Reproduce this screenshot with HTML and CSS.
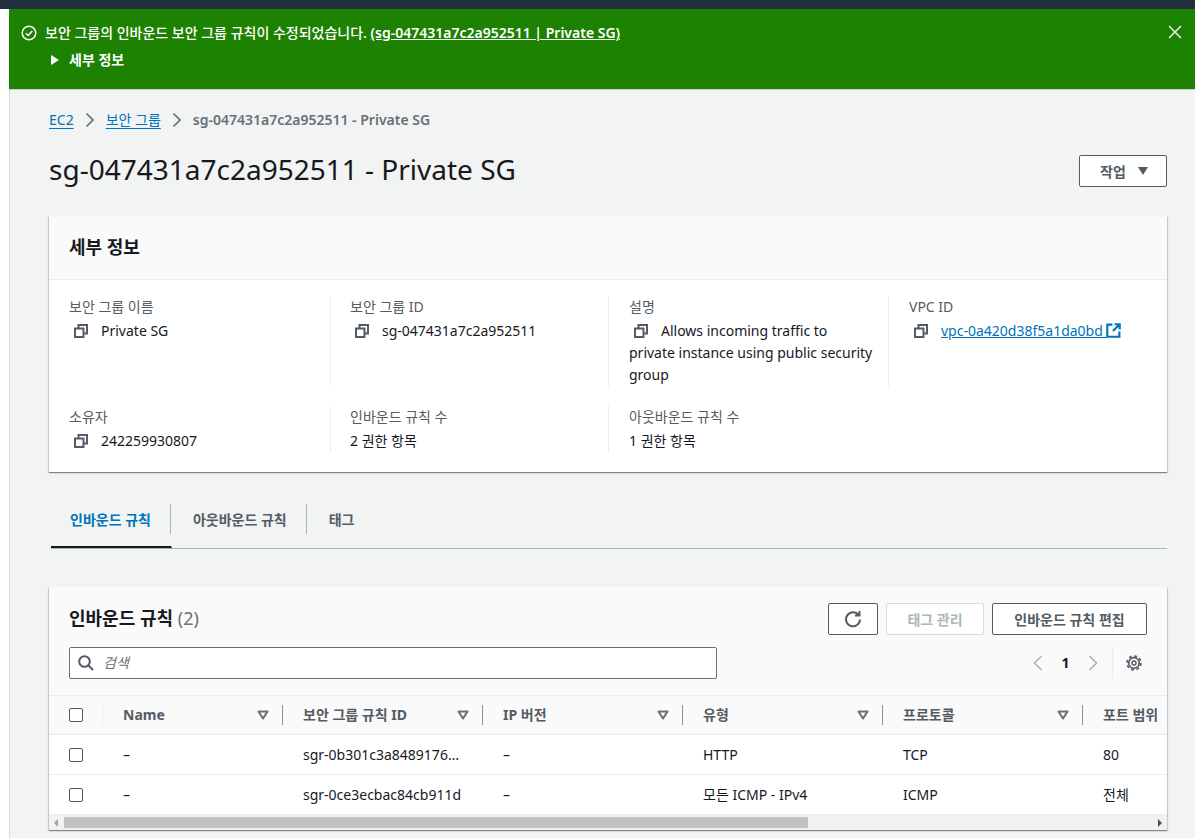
FILE: index.html
```html
<!DOCTYPE html>
<html lang="ko">
<head>
    <meta charset="UTF-8">
    <meta name="viewport" content="width=device-width, initial-scale=1.0">
    <title>sg-047431a7c2a952511 - Private SG</title>
    <link rel="stylesheet" href="styles.css">
</head>
<body>
    <svg class="sprites" width="0" height="0">
        <symbol id="copy" viewBox="0 0 14 14">
            <path d="M1 4.500h8.500v8.500H1z M4.500 4.500V1H13v8.500H9.500" fill="none" stroke="currentColor" stroke-width="2"/>
        </symbol>
        <symbol id="caret" viewBox="0 0 12 10">
            <path d="M1.500 1.500h9L6 8.500z" fill="none" stroke="currentColor" stroke-width="2" stroke-linejoin="round"/>
        </symbol>
    </svg>
    <div class="topbar"></div>
    <div class="shell">
        <div class="rail"></div>
        <div class="page">
            <div class="flash">
                <svg class="flash-icon" width="16" height="16" viewBox="0 0 16 16">
                    <circle cx="8" cy="8" r="6.800" fill="none" stroke="currentColor" stroke-width="1.500"/>
                    <path d="M4.800 8.200l2.300 2.300 4.200-4.600" fill="none" stroke="currentColor" stroke-width="1.500"/>
                </svg>
                <div class="flash-body">
                    <div class="flash-msg">보안 그룹의 인바운드 보안 그룹 규칙이 수정되었습니다. <a href="#">(sg-047431a7c2a952511 | Private SG)</a></div>
                    <div class="flash-more"><span class="flash-tri"></span>세부 정보</div>
                </div>
                <svg class="flash-close" width="14" height="14" viewBox="0 0 14 14">
                    <path d="M1 1l12 12M13 1L1 13" fill="none" stroke="currentColor" stroke-width="1.600"/>
                </svg>
            </div>

            <div class="content">
                <nav class="crumbs">
                    <a href="#">EC2</a>
                    <svg width="10" height="16" viewBox="0 0 10 16"><path d="M1.500 1.500L8 8l-6.500 6.500" fill="none" stroke="currentColor" stroke-width="1.700"/></svg>
                    <a href="#">보안 그룹</a>
                    <svg width="10" height="16" viewBox="0 0 10 16"><path d="M1.500 1.500L8 8l-6.500 6.500" fill="none" stroke="currentColor" stroke-width="1.700"/></svg>
                    <span>sg-047431a7c2a952511 - Private SG</span>
                </nav>

                <div class="title-row">
                    <h1>sg-047431a7c2a952511 - Private SG</h1>
                    <button class="btn btn-actions">작업<span class="solid-caret"></span></button>
                </div>

                <section class="card details">
                    <div class="card-head"><h2>세부 정보</h2></div>
                    <div class="detail-grid">
                        <div class="item">
                            <div class="label">보안 그룹 이름</div>
                            <div class="value"><svg class="copy"><use href="#copy"/></svg>Private SG</div>
                        </div>
                        <div class="item">
                            <div class="label">보안 그룹 ID</div>
                            <div class="value"><svg class="copy"><use href="#copy"/></svg>sg-047431a7c2a952511</div>
                        </div>
                        <div class="item">
                            <div class="label">설명</div>
                            <div class="value"><svg class="copy"><use href="#copy"/></svg>Allows incoming traffic to private instance using public security group</div>
                        </div>
                        <div class="item">
                            <div class="label">VPC ID</div>
                            <div class="value"><svg class="copy"><use href="#copy"/></svg><a href="#">vpc-0a420d38f5a1da0bd <svg class="ext" width="15" height="15" viewBox="0 0 14 14"><path d="M6 1.500H1.200v11.300h11.300V8M8 1.200h4.800V6M12.500 1.500L6.500 7.500" fill="none" stroke="currentColor" stroke-width="2"/></svg></a></div>
                        </div>
                        <div class="item">
                            <div class="label">소유자</div>
                            <div class="value"><svg class="copy"><use href="#copy"/></svg>242259930807</div>
                        </div>
                        <div class="item">
                            <div class="label">인바운드 규칙 수</div>
                            <div class="value">2 권한 항목</div>
                        </div>
                        <div class="item">
                            <div class="label">아웃바운드 규칙 수</div>
                            <div class="value">1 권한 항목</div>
                        </div>
                    </div>
                </section>

                <div class="tabs">
                    <a class="tab active" href="#">인바운드 규칙</a>
                    <a class="tab" href="#">아웃바운드 규칙</a>
                    <a class="tab" href="#">태그</a>
                </div>

                <section class="card rules">
                    <div class="rules-head">
                        <div class="rules-top">
                            <h2>인바운드 규칙 <span class="count">(2)</span></h2>
                            <div class="actions">
                                <button class="btn btn-refresh">
                                    <svg width="18" height="18" viewBox="0 0 18 18"><path d="M14.500 5A7 7 0 1 0 16 9.500M15.500 1v4.500H11" fill="none" stroke="currentColor" stroke-width="2"/></svg>
                                </button>
                                <button class="btn btn-disabled">태그 관리</button>
                                <button class="btn btn-edit">인바운드 규칙 편집</button>
                            </div>
                        </div>
                        <div class="rules-filter">
                            <div class="search">
                                <svg width="16" height="16" viewBox="0 0 16 16"><circle cx="6.500" cy="6.500" r="5.300" fill="none" stroke="currentColor" stroke-width="2"/><path d="M10.500 10.500L15 15" fill="none" stroke="currentColor" stroke-width="2"/></svg>
                                <span>검색</span>
                            </div>
                            <div class="pager">
                                <svg class="pg-arrow" width="10" height="16" viewBox="0 0 10 16"><path d="M8.500 1L1.500 8l7 7" fill="none" stroke="currentColor" stroke-width="1.700"/></svg>
                                <span class="pg-num">1</span>
                                <svg class="pg-arrow" width="10" height="16" viewBox="0 0 10 16"><path d="M1.500 1l7 7-7 7" fill="none" stroke="currentColor" stroke-width="1.700"/></svg>
                            </div>
                            <div class="prefs">
                                <svg width="16" height="16" viewBox="0 0 16 16">
                                    <circle cx="8" cy="8" r="5.300" fill="none" stroke="currentColor" stroke-width="1.700"/>
                                    <circle cx="8" cy="8" r="2" fill="none" stroke="currentColor" stroke-width="1.400"/>
                                    <circle cx="8" cy="8" r="7" fill="none" stroke="currentColor" stroke-width="1.600" stroke-dasharray="3 2.500"/>
                                </svg>
                            </div>
                        </div>
                    </div>

                    <div class="table">
                        <div class="row row-head">
                            <div class="cell cell-check"><span class="check"></span></div>
                            <div class="cell">Name<svg class="sort"><use href="#caret"/></svg></div>
                            <div class="cell">보안 그룹 규칙 ID<svg class="sort"><use href="#caret"/></svg></div>
                            <div class="cell">IP 버전<svg class="sort"><use href="#caret"/></svg></div>
                            <div class="cell">유형<svg class="sort"><use href="#caret"/></svg></div>
                            <div class="cell">프로토콜<svg class="sort"><use href="#caret"/></svg></div>
                            <div class="cell">포트 범위</div>
                        </div>
                        <div class="row">
                            <div class="cell cell-check"><span class="check"></span></div>
                            <div class="cell">–</div>
                            <div class="cell">sgr-0b301c3a8489176…</div>
                            <div class="cell">–</div>
                            <div class="cell">HTTP</div>
                            <div class="cell">TCP</div>
                            <div class="cell">80</div>
                        </div>
                        <div class="row">
                            <div class="cell cell-check"><span class="check"></span></div>
                            <div class="cell">–</div>
                            <div class="cell">sgr-0ce3ecbac84cb911d</div>
                            <div class="cell">–</div>
                            <div class="cell">모든 ICMP - IPv4</div>
                            <div class="cell">ICMP</div>
                            <div class="cell">전체</div>
                        </div>
                    </div>

                    <div class="hscroll">
                        <span class="sb-arrow sb-left"></span>
                        <div class="sb-track"><div class="sb-thumb"></div></div>
                        <span class="sb-arrow sb-right"></span>
                    </div>
                </section>
            </div>
        </div>
    </div>
</body>
</html>
```

FILE: styles.css
```css
* {
    box-sizing: border-box;
}
html, body {
    margin: 0;
    height: 100%;
    overflow: hidden;
}
body {
    font-family: "Noto Sans", "Noto Sans CJK KR", sans-serif;
    font-size: 14px;
    line-height: 22px;
    color: #16191f;
    background: #f2f3f3;
}
a {
    color: #0073bb;
}
h1, h2 {
    margin: 0;
}
.sprites {
    position: absolute;
}
.topbar {
    height: 9px;
    background: #232f3e;
}
.shell {
    display: flex;
    height: 829px;
}
.rail {
    width: 10px;
    flex: none;
    background: #fff;
    border-right: 1px solid #d5dbdb;
}
.page {
    flex: 1;
    min-width: 0;
}

/* flash */
.flash {
    display: flex;
    height: 81px;
    margin-left: -1px;
    padding: 13px 13px 0 12px;
    background: #1d8102;
    color: #fff;
    border-bottom: 1px solid #c8cccc;
}
.flash-icon {
    flex: none;
    margin: 3px 8px 0 0;
}
.flash-body {
    flex: 1;
    font-weight: 500;
}
.flash-msg a {
    color: #fff;
    font-weight: 600;
}
.flash-more {
    display: flex;
    align-items: center;
    margin-top: 5px;
    padding-left: 6px;
    font-weight: 600;
}
.flash-tri {
    width: 0;
    height: 0;
    margin-right: 10px;
    border-left: 8px solid #fff;
    border-top: 5px solid transparent;
    border-bottom: 5px solid transparent;
}
.flash-close {
    flex: none;
    margin-top: 3px;
    color: #e6ece2;
}

/* header */
.content {
    padding: 0 28px 0 39px;
}
.crumbs {
    display: flex;
    align-items: center;
    gap: 11px;
    height: 22px;
    margin-top: 19px;
    color: #687078;
}
.crumbs a {
    text-underline-offset: 3px;
}
.crumbs span {
    font-weight: 600;
}
.title-row {
    display: flex;
    justify-content: space-between;
    align-items: flex-start;
    height: 32px;
    margin-top: 24px;
}
h1 {
    font-size: 28px;
    font-weight: 400;
    line-height: 28px;
}
.btn {
    height: 32px;
    padding: 0 20px;
    border: 1px solid #545b64;
    border-radius: 2px;
    background: #fff;
    color: #545b64;
    font: 600 14px "Noto Sans", "Noto Sans CJK KR", sans-serif;
    white-space: nowrap;
}
.btn-actions {
    display: flex;
    align-items: center;
    gap: 12px;
    width: 88px;
    padding: 0 0 0 20px;
}
.solid-caret {
    flex: none;
    width: 0;
    height: 0;
    border-top: 8px solid #545b64;
    border-left: 5.500px solid transparent;
    border-right: 5.500px solid transparent;
}

/* cards */
.card {
    background: #fff;
    box-shadow: 0 1px 1px 0 rgba(0, 28, 36, 0.3), 1px 1px 1px 0 rgba(0, 28, 36, 0.15), -1px 1px 1px 0 rgba(0, 28, 36, 0.15);
}
.details {
    height: 256px;
    margin-top: 29px;
}
.card-head {
    height: 64px;
    padding: 19px 20px 0;
    background: #fafafa;
    border-bottom: 1px solid #eaeded;
}
.card h2 {
    font-size: 18px;
    font-weight: 700;
    line-height: 24px;
}
.detail-grid {
    display: grid;
    grid-template-columns: 280px 278px 280px 280px;
    grid-template-rows: 90px 46px;
    row-gap: 20px;
    margin: 16px 0 0 1px;
}
.item {
    padding: 0 15px 0 20px;
    border-left: 1px solid #eaeded;
}
.item:nth-child(2),
.item:nth-child(6) {
    padding-left: 19px;
}
.item:first-child,
.item:nth-child(5) {
    padding-left: 19px;
    border-left: none;
}
.label {
    color: #545b64;
    margin-bottom: 2px;
}
.copy {
    width: 14px;
    height: 14px;
    margin: 0 13px 0 5px;
    color: #545b64;
    vertical-align: -2px;
}
.ext {
    vertical-align: -2px;
}

/* tabs */
.tabs {
    display: flex;
    align-items: flex-start;
    height: 45px;
    margin-top: 32px;
    margin-left: 2px;
    border-bottom: 1px solid #aab7b8;
}
.tab {
    display: block;
    height: 44px;
    padding: 5px 20px 0 21px;
    color: #545b64;
    font-weight: 700;
    text-decoration: none;
    border-right: 1px solid transparent;
    background: linear-gradient(#aab7b8, #aab7b8) right 0 / 1px 30px no-repeat;
}
.tab:first-child {
    padding-left: 19px;
}
.tab:last-child {
    background: none;
}
.tab.active {
    color: #0073bb;
    border-bottom: 2px solid #16191f;
}

/* rules table */
.rules {
    height: 243px;
    margin-top: 38px;
    overflow: hidden;
}
.rules-head {
    height: 109px;
    padding: 16px 20px 0;
    background: #fafafa;
    border-bottom: 1px solid #eaeded;
}
.rules-top {
    display: flex;
    justify-content: space-between;
    height: 32px;
}
.rules-top h2 {
    line-height: 30px;
}
.count {
    color: #687078;
    font-weight: 400;
}
.actions {
    display: flex;
    gap: 8px;
}
.btn-refresh {
    width: 50px;
    padding: 0;
    display: flex;
    align-items: center;
    justify-content: center;
}
.btn-disabled {
    width: 98px;
    padding: 0;
    border-color: #d5dbdb;
    color: #aab7b8;
}
.btn-edit {
    width: 155px;
    padding: 0;
}
.rules-filter {
    display: flex;
    align-items: center;
    height: 32px;
    margin-top: 12px;
}
.search {
    display: flex;
    align-items: center;
    gap: 9px;
    width: 648px;
    height: 32px;
    padding: 0 8px;
    background: #fff;
    border: 1px solid #687078;
    border-radius: 2px;
    color: #545b64;
}
.search span {
    color: #687078;
    font-style: italic;
}
.pager {
    display: flex;
    align-items: center;
    margin-left: auto;
    color: #aab7b8;
}
.pg-num {
    width: 45px;
    text-align: center;
    color: #16191f;
    font-weight: 700;
}
.prefs {
    display: flex;
    align-items: center;
    height: 32px;
    margin-left: 14px;
    padding: 0 5px 0 13px;
    border-left: 1px solid #eaeded;
    color: #545b64;
}
.row {
    display: grid;
    grid-template-columns: 53px 180px repeat(5, 200px);
    height: 40px;
    border-bottom: 1px solid #eaeded;
}
.row-head {
    height: 39px;
    background: #fafafa;
    color: #545b64;
    font-weight: 700;
}
.cell {
    display: flex;
    align-items: center;
    padding-left: 21px;
    white-space: nowrap;
}
.cell-check {
    padding-left: 20px;
}
.row-head .cell {
    background: linear-gradient(#879596, #879596) left center / 1px 20px no-repeat;
}
.row-head .cell:first-child {
    background: none;
}
.row-head .cell:nth-child(2) {
    background: linear-gradient(#eaeded, #eaeded) left center / 1px 20px no-repeat;
}
.sort {
    flex: none;
    width: 12px;
    height: 10px;
    margin-left: auto;
    margin-right: 13px;
    color: #687078;
}
.check {
    width: 14px;
    height: 14px;
    background: #fff;
    border: 1px solid #545b64;
    border-radius: 2px;
}
.hscroll {
    display: flex;
    align-items: center;
    height: 15px;
    background: #f1f1f1;
}
.sb-arrow {
    flex: none;
    width: 0;
    height: 0;
    border-top: 4px solid transparent;
    border-bottom: 4px solid transparent;
}
.sb-left {
    margin: 0 6px 0 5px;
    border-right: 4px solid #a3a3a3;
}
.sb-right {
    margin: 0 5px 0 6px;
    border-left: 4px solid #505050;
}
.sb-track {
    flex: 1;
    height: 11px;
}
.sb-thumb {
    width: 744px;
    height: 11px;
    background: #c1c1c1;
}
```
